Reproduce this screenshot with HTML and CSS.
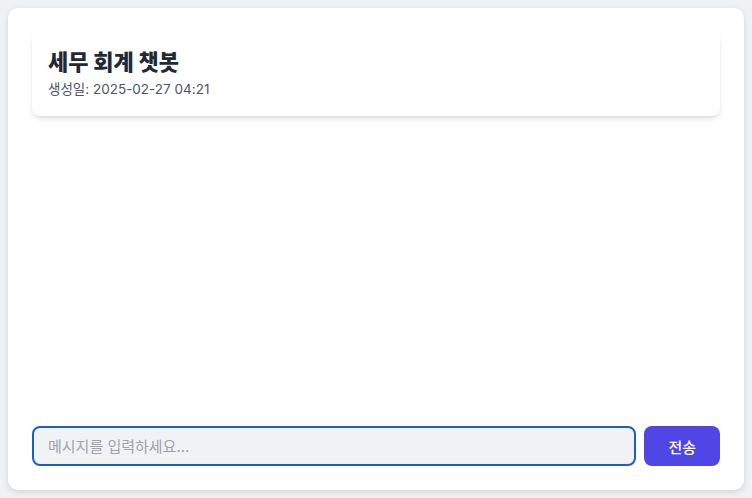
FILE: index.html
```html
<!DOCTYPE html>
<html lang="ko">
<head>
  <meta charset="UTF-8" />
  <meta name="viewport" content="width=device-width, initial-scale=1.0"/>
  <title>세무 회계 챗봇</title>
  <link rel="stylesheet" href="styles.css">
</head>
<body>

<div class="chat-window">
  <div class="chat-header">
    <h1>세무 회계 챗봇</h1>
    <div class="created">생성일: 2025-02-27 04:21</div>
  </div>

  <!-- 대화 내용 영역 -->
  <div class="messages"></div>

  <form class="input-row">
    <input type="text" class="message-input" placeholder="메시지를 입력하세요...">
    <button type="button" class="send-btn">전송</button>
  </form>
</div>

</body>
</html>
```

FILE: styles.css
```css
body {
  font-family: Inter, 'Noto Sans CJK KR', sans-serif;
  background: #f0f1f3;
  margin: 0;
  padding: 8px;
  box-sizing: border-box;
  height: 498px;
}

.chat-window {
  background: white;
  border-radius: 10px;
  box-shadow: 0 2px 6px rgba(0,0,0,0.12);
  height: 482px;
  box-sizing: border-box;
  padding: 24px;
  display: flex;
  flex-direction: column;
}

.chat-header {
  background: white;
  border-radius: 8px;
  padding: 15px 16px 17px;
  box-shadow: 0 4px 6px -1px rgba(0,0,0,0.1), 0 2px 4px -2px rgba(0,0,0,0.1);
}

.chat-header h1 {
  margin: 0;
  font-size: 22px;
  line-height: 30px;
  font-weight: 800;
  color: #1f2937;
}

.created {
  margin-top: 2px;
  font-size: 13.5px;
  line-height: 20px;
  color: #4b5563;
}

.messages {
  flex: 1;
}

.input-row {
  display: flex;
  gap: 8px;
  margin: 0;
}

.message-input {
  flex: 1;
  height: 40px;
  box-sizing: border-box;
  border: 2px solid #1a60c2;
  border-radius: 8px;
  background: #f1f2f4;
  padding: 0 14px;
  font-family: inherit;
  font-size: 15px;
  color: #1f2937;
  outline: none;
}

.message-input::placeholder {
  color: #9ca3af;
}

.send-btn {
  height: 40px;
  padding: 0 24px;
  border: none;
  border-radius: 8px;
  background: #4f46e5;
  color: white;
  font-family: inherit;
  font-size: 15px;
  font-weight: 500;
}
```
